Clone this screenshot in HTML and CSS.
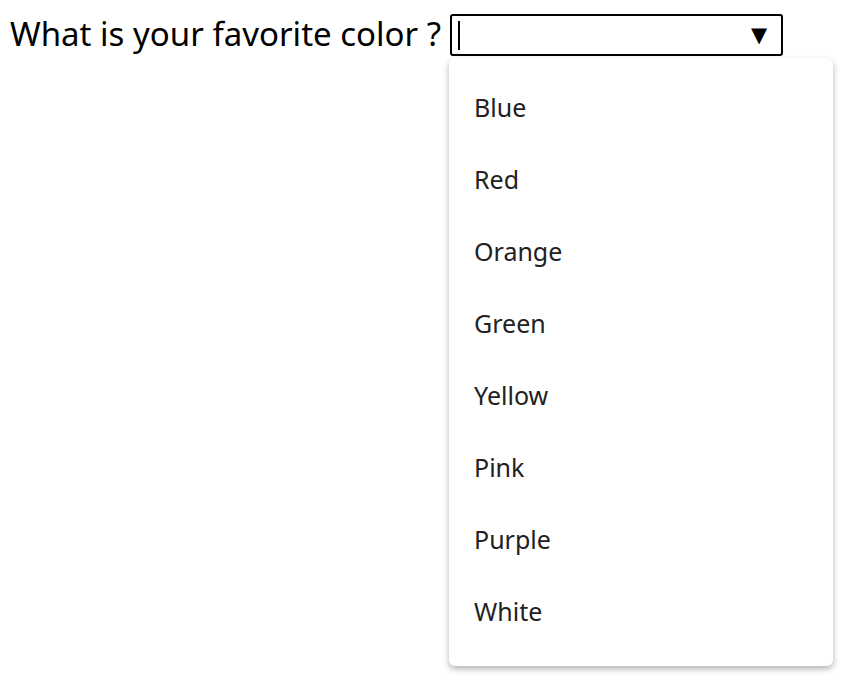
FILE: index.html
```html
<!DOCTYPE html>
<html lang="en">
<head>
<meta charset="utf-8">
<title>Favorite color</title>
<link rel="stylesheet" href="styles.css">
</head>
<body>
<div class="field">
  <label class="question" for="color">What is your favorite color ?</label>
  <div class="select" id="color">
    <span class="caret"></span>
    <span class="arrow">▼</span>
  </div>
  <ul class="options">
    <li>Blue</li>
    <li>Red</li>
    <li>Orange</li>
    <li>Green</li>
    <li>Yellow</li>
    <li>Pink</li>
    <li>Purple</li>
    <li>White</li>
  </ul>
</div>
</body>
</html>
```
FILE: styles.css
```css
html, body {
  margin: 0;
  padding: 0;
  background: #fff;
}
body {
  font-family: "Noto Sans", "Open Sans", sans-serif;
  color: #000;
  padding-bottom: 12px;
}
.field {
  display: grid;
  grid-template-columns: auto 333px;
  column-gap: 9px;
  justify-content: start;
  align-items: start;
  padding: 14px 0 0 10px;
}
.question {
  font-size: 33px;
  line-height: 40px;
  white-space: nowrap;
}
.select {
  box-sizing: border-box;
  width: 333px;
  height: 42px;
  border: 2px solid #000;
  border-radius: 3px;
  display: flex;
  align-items: center;
  justify-content: space-between;
  padding: 0 14px 0 6px;
}
.caret {
  width: 2px;
  height: 29px;
  background: #000;
}
.arrow {
  font-family: "DejaVu Sans", sans-serif;
  font-size: 21px;
  line-height: 1;
}
.options {
  grid-column: 2;
  grid-row: 2;
  width: 384px;
  box-sizing: border-box;
  margin: 2px 0 0 -1px;
  padding: 13px 0 19px;
  list-style: none;
  background: #fff;
  border-radius: 6px;
  box-shadow: 0 3px 6px rgba(0, 0, 0, 0.3);
}
.options li {
  height: 72px;
  line-height: 72px;
  padding-left: 25px;
  font-size: 25px;
  color: #212121;
}
```
